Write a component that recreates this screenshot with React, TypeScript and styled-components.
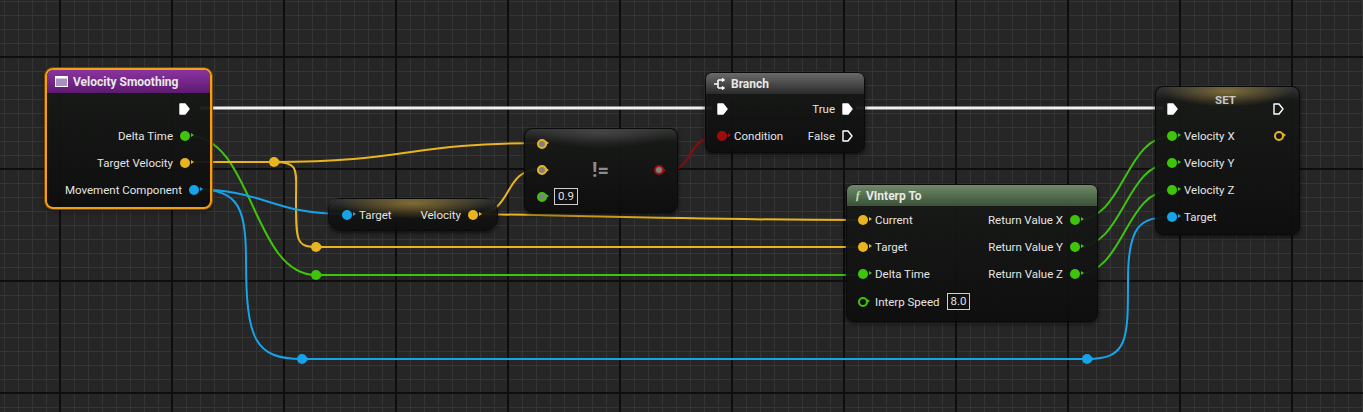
import React from "react";
import styled, { createGlobalStyle, css } from "styled-components";

const Global = createGlobalStyle`
  html, body { margin: 0; padding: 0; background: #262626; }
  body { font-family: Roboto, "Noto Sans", sans-serif; }
`;

const Canvas = styled.div`
  position: relative;
  width: 1363px;
  height: 412px;
  overflow: hidden;
  background-color: #262626;
  background-image:
    linear-gradient(90deg, #353535 1px, transparent 1px),
    linear-gradient(#353535 1px, transparent 1px);
  background-size: 14px 14px, 14px 14px;
  background-position: 4px 1px, 4px 1px;
`;

const MajorGrid = styled.div`
  position: absolute;
  inset: 0;
  background-image:
    linear-gradient(90deg, #0e0e0e 2px, transparent 2px),
    linear-gradient(#0e0e0e 2px, transparent 2px);
  background-size: 112px 112px;
  background-position: 59px 56px;
`;

const Wires = styled.svg`
  position: absolute;
  inset: 0;
`;

const Node = styled.div<{ $x: number; $y: number; $w: number; $pill?: boolean; $selected?: boolean }>`
  position: absolute;
  left: ${(p) => p.$x}px;
  top: ${(p) => p.$y}px;
  width: ${(p) => p.$w}px;
  box-sizing: border-box;
  border-radius: ${(p) => (p.$pill ? 13 : 8)}px;
  background: linear-gradient(180deg, rgba(24, 26, 24, 0.94), rgba(12, 13, 12, 0.94));
  border: 1px solid #0a0a0a;
  box-shadow: 0 2px 4px rgba(0, 0, 0, 0.6);
  color: #e4e4e4;
  font-size: 11.5px;
  ${(p) =>
    p.$selected &&
    css`
      border: 2px solid #f0a010;
      box-shadow: 0 0 0 1px #7a4a00, 0 2px 4px rgba(0, 0, 0, 0.6);
    `}
`;

const Header = styled.div<{ $bg: string; $h?: number }>`
  height: ${(p) => p.$h ?? 22}px;
  display: flex;
  align-items: center;
  gap: 5px;
  padding: 0 8px;
  border-radius: 6px 6px 0 0;
  background: ${(p) => p.$bg};
  font-weight: 700;
  font-size: 12px;
  color: #e8e8e8;
`;

const Gloss = styled.div<{ $color: string }>`
  position: absolute;
  left: 0;
  right: 0;
  top: 0;
  height: 22px;
  border-radius: 8px 8px 0 0;
  background:
    radial-gradient(ellipse 45% 70% at 50% 20%, ${(p) => p.$color}, transparent),
    linear-gradient(180deg, rgba(255, 255, 255, 0.12), transparent 60%);
  pointer-events: none;
`;

const Body = styled.div<{ $pt?: number; $pb?: number; $pl?: number; $pr?: number }>`
  position: relative;
  display: flex;
  flex-direction: column;
  padding: ${(p) => p.$pt ?? 2}px ${(p) => p.$pr ?? 17}px ${(p) => p.$pb ?? 5}px ${(p) => p.$pl ?? 11}px;
`;

const Row = styled.div<{ $h?: number }>`
  height: ${(p) => p.$h ?? 27}px;
  display: flex;
  align-items: center;
  gap: 7px;
  white-space: nowrap;
`;

const Spacer = styled.div`
  flex: 1;
`;

const Pin = styled.span<{ $c: string; $hollow?: boolean; $ring?: string }>`
  position: relative;
  flex: none;
  width: 10px;
  height: 10px;
  border-radius: 50%;
  box-sizing: border-box;
  background: ${(p) => (p.$hollow ? "transparent" : p.$ring ? "#808080" : p.$c)};
  border: ${(p) => (p.$hollow ? `2px solid ${p.$c}` : p.$ring ? `2px solid ${p.$ring}` : "none")};
  &::after {
    content: "";
    position: absolute;
    right: -4px;
    top: 50%;
    margin-top: -2.5px;
    border-left: 3px solid ${(p) => p.$ring ?? p.$c};
    border-top: 2.5px solid transparent;
    border-bottom: 2.5px solid transparent;
  }
`;

const ValueBox = styled.span`
  border: 1px solid #cfcfcf;
  padding: 0 3px;
  font-size: 11.5px;
  line-height: 15px;
  color: #e0e0e0;
`;

const OpLabel = styled.div`
  flex: 1;
  text-align: center;
  font-size: 20px;
  font-weight: 700;
  color: #8c8c8c;
`;

const SetLabel = styled.div`
  flex: 1;
  text-align: center;
  align-self: flex-start;
  margin-top: -2px;
  font-weight: 700;
  font-size: 11.5px;
  color: #c8c8c8;
`;

const Exec = ({ filled = true }: { filled?: boolean }) => (
  <svg width="11" height="12" viewBox="0 0 11 12" style={{ flex: "none" }}>
    <path
      d="M1 1 H6 L10 6 L6 11 H1 Z"
      fill={filled ? "#ffffff" : "none"}
      stroke="#ffffff"
      strokeWidth="1.4"
      strokeLinejoin="round"
    />
  </svg>
);

const wire = (x1: number, y1: number, x2: number, y2: number) => {
  const d = Math.max(Math.abs(x2 - x1) * 0.5, 40);
  return `M${x1} ${y1} C${x1 + d} ${y1} ${x2 - d} ${y2} ${x2} ${y2}`;
};

const Knot = ({ x, y, c }: { x: number; y: number; c: string }) => (
  <g>
    <circle cx={x} cy={y} r={5} fill={c} />
    <path d={`M${x + 4} ${y - 2.5} L${x + 7} ${y} L${x + 4} ${y + 2.5} Z`} fill={c} />
  </g>
);

const Y = "#e8b520";
const G = "#3fc40c";
const B = "#17a3e8";

export default function App() {
  return (
    <Canvas>
      <Global />
      <MajorGrid />
      <Wires width="1363" height="412">
        <g fill="none" strokeWidth="2">
          <path d="M200 108 H712" stroke="#f2f2f2" strokeWidth="3" />
          <path d="M856 108 H1163" stroke="#f2f2f2" strokeWidth="3" />
          <path d={wire(189, 136, 316, 275)} stroke={G} />
          <path d="M316 275 H862" stroke={G} />
          <path d="M189 162 H274" stroke={Y} />
          <path d={wire(274, 162, 541, 143)} stroke={Y} />
          <path d="M274 162 C300 162 296 170 296 200 C296 240 296 247 316 247" stroke={Y} />
          <path d="M316 247 H862" stroke={Y} />
          <path d={wire(475, 214, 541, 169)} stroke={Y} />
          <path d="M475 214 C600 216 700 220 862 220" stroke={Y} />
          <path d={wire(189, 189, 346, 214)} stroke={B} />
          <path d="M189 189 C235 189 246 200 246 260 C246 340 255 359 302 359" stroke={B} />
          <path d="M302 359 H1087" stroke={B} />
          <path d="M1087 359 C1128 359 1128 340 1128 280 C1128 225 1140 217 1172 217" stroke={B} />
          <path d={wire(660, 172, 721, 136)} stroke="#8a0c0c" />
          <path d={wire(1077, 220, 1172, 136)} stroke={G} />
          <path d={wire(1077, 247, 1172, 163)} stroke={G} />
          <path d={wire(1077, 274, 1172, 190)} stroke={G} />
        </g>
        <Knot x={274} y={162} c={Y} />
        <Knot x={316} y={247} c={Y} />
        <Knot x={316} y={275} c={G} />
        <Knot x={302} y={359} c={B} />
        <Knot x={1087} y={359} c={B} />
      </Wires>

      <Node $x={45} $y={68} $w={167} $selected>
        <Header $bg="linear-gradient(180deg,#8a34a0,#5e1a70)" $h={23}>
          <svg width="13" height="11" viewBox="0 0 13 11">
            <rect x="0.5" y="0.5" width="12" height="10" fill="#a98fc0" stroke="#fff" />
            <rect x="0.5" y="0.5" width="12" height="2" fill="#fff" />
          </svg>
          Velocity Smoothing
        </Header>
        <Body $pt={2} $pb={4} $pr={20}>
          <Row><Spacer /><Exec /></Row>
          <Row><Spacer />Delta Time<Pin $c={G} /></Row>
          <Row><Spacer />Target Velocity<Pin $c={Y} /></Row>
          <Row><Spacer />Movement Component<Pin $c={B} /></Row>
        </Body>
      </Node>

      <Node $x={328} $y={198} $w={170} $pill>
        <Gloss $color="rgba(200,160,60,0.55)" />
        <Body $pt={2} $pb={2} $pl={13} $pr={19}>
          <Row><Pin $c={B} />Target<Spacer />Velocity<Pin $c={Y} /></Row>
        </Body>
      </Node>

      <Node $x={524} $y={128} $w={154}>
        <Gloss $color="rgba(110,110,110,0.35)" />
        <Body $pt={1} $pb={2} $pl={12} $pr={13}>
          <Row $h={27}><Pin $c={Y} $ring={Y} /></Row>
          <Row $h={26}><Pin $c={Y} $ring={Y} /><OpLabel>!=</OpLabel><Pin $c="#a01010" $ring="#a01010" /></Row>
          <Row $h={27}><Pin $c={G} $ring={G} /><ValueBox>0.9</ValueBox></Row>
        </Body>
      </Node>

      <Node $x={705} $y={72} $w={160}>
        <Header $bg="linear-gradient(180deg,#6a6a6a,#2a2a2a)" $h={21}>
          <svg width="12" height="12" viewBox="0 0 12 12" fill="none" stroke="#fff" strokeWidth="1.5">
            <path d="M0 6 H4 M4 2 V10 M4 2 H9 M4 10 H9 M8 0.5 L10 2 L8 3.5 M8 8.5 L10 10 L8 11.5" />
          </svg>
          Branch
        </Header>
        <Body $pt={1} $pb={3} $pl={11} $pr={11}>
          <Row><Exec /><Spacer />True<Exec /></Row>
          <Row><Pin $c="#a00c0c" />Condition<Spacer />False<Exec filled={false} /></Row>
        </Body>
      </Node>

      <Node $x={846} $y={184} $w={252}>
        <Header $bg="linear-gradient(180deg,#6f8a6a,#3a5236)" $h={21}>
          <span style={{ fontStyle: "italic", fontFamily: "'Liberation Serif', serif", color: "#b8e0a8" }}>ƒ</span>
          VInterp To
        </Header>
        <Body $pt={0} $pb={5} $pl={11} $pr={17}>
          <Row><Pin $c={Y} />Current<Spacer />Return Value X<Pin $c={G} /></Row>
          <Row><Pin $c={Y} />Target<Spacer />Return Value Y<Pin $c={G} /></Row>
          <Row><Pin $c={G} />Delta Time<Spacer />Return Value Z<Pin $c={G} /></Row>
          <Row $h={29}><Pin $c={G} $hollow />Interp Speed<ValueBox>8.0</ValueBox></Row>
        </Body>
      </Node>

      <Node $x={1155} $y={86} $w={145}>
        <Gloss $color="rgba(180,150,70,0.6)" />
        <Body $pt={8} $pb={4} $pl={11} $pr={15}>
          <Row><Exec /><SetLabel>SET</SetLabel><Exec filled={false} /></Row>
          <Row><Pin $c={G} />Velocity X<Spacer /><Pin $c={Y} $hollow /></Row>
          <Row><Pin $c={G} />Velocity Y</Row>
          <Row><Pin $c={G} />Velocity Z</Row>
          <Row><Pin $c={B} />Target</Row>
        </Body>
      </Node>
    </Canvas>
  );
}
